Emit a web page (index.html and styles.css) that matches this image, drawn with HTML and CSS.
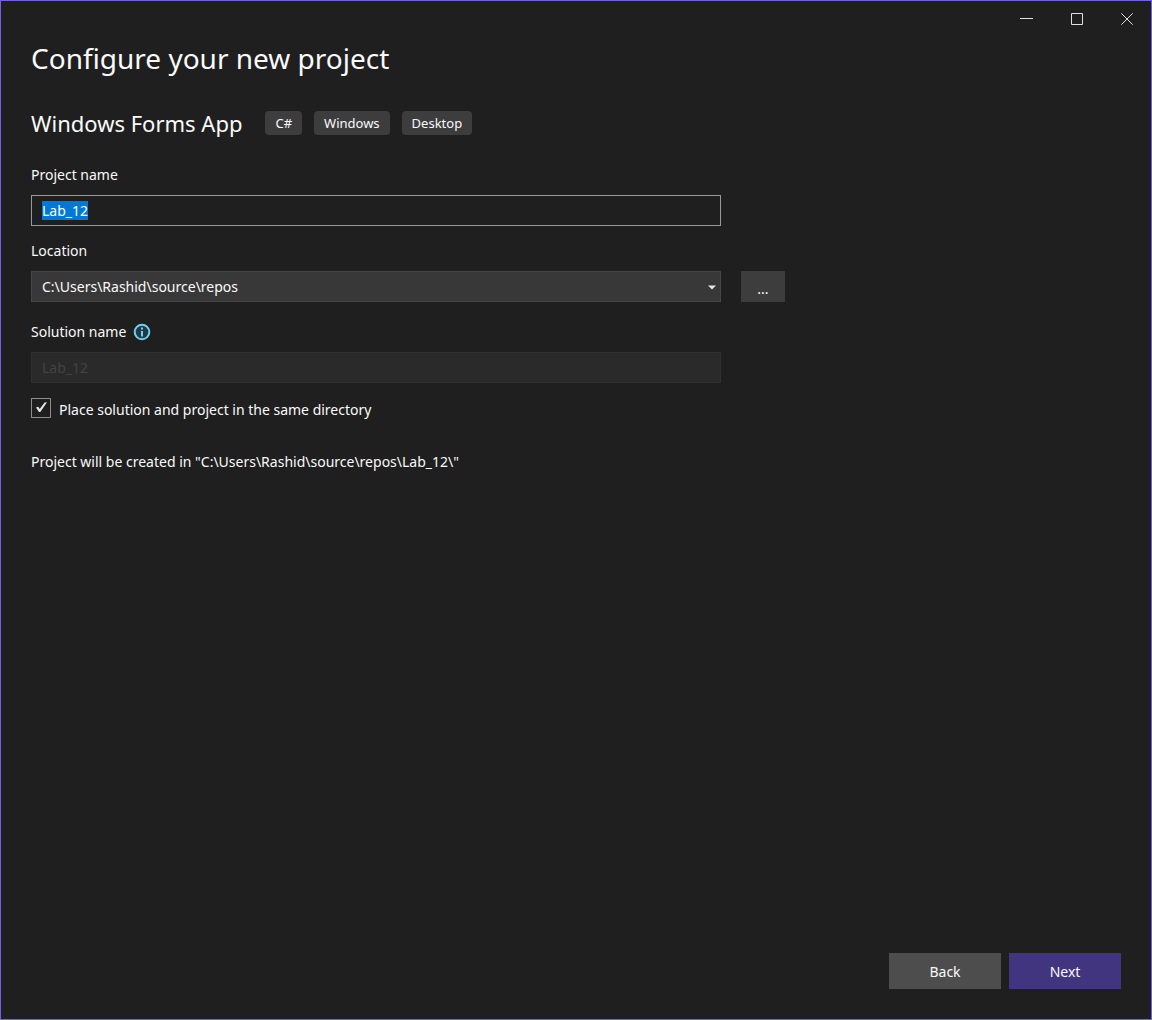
FILE: index.html
```html
<!DOCTYPE html>
<html lang="en">
<head>
<meta charset="utf-8">
<meta name="viewport" content="width=device-width, initial-scale=1">
<title>Configure your new project</title>
<link rel="stylesheet" href="styles.css">
</head>
<body>
<div class="window">
  <header class="titlebar">
    <button class="caption-button" type="button" aria-label="Minimize">
      <svg width="14" height="14" viewBox="0 0 14 14"><path d="M0 6.5h13" /></svg>
    </button>
    <button class="caption-button" type="button" aria-label="Maximize">
      <svg width="14" height="14" viewBox="0 0 14 14"><path d="M1.5 1.5h11v11h-11z" /></svg>
    </button>
    <button class="caption-button" type="button" aria-label="Close">
      <svg width="14" height="14" viewBox="0 0 14 14"><path d="M1.3 1.3l11.4 11.4M12.7 1.3L1.3 12.7" /></svg>
    </button>
  </header>
  <form class="page">
    <main class="content">
      <h1 class="title">Configure your new project</h1>
      <div class="template">
        <h2 class="template-name">Windows Forms App</h2>
        <ul class="tags">
          <li class="tag">C#</li>
          <li class="tag">Windows</li>
          <li class="tag">Desktop</li>
        </ul>
      </div>

      <div class="field">
        <label class="label" for="project-name">Project name</label>
        <input class="control" id="project-name" type="text" value="Lab_12" spellcheck="false" autocomplete="off" autofocus>
      </div>

      <div class="field">
        <label class="label" for="location">Location</label>
        <div class="location-row">
          <div class="combo">
            <select class="control control-filled" id="location">
              <option>C:\Users\Rashid\source\repos</option>
            </select>
            <svg class="combo-arrow" width="8" height="5" viewBox="0 0 8 5" aria-hidden="true"><path d="M0 .5h8L4 4.5z" /></svg>
          </div>
          <button class="browse" type="button" aria-label="Browse">...</button>
        </div>
      </div>

      <div class="field field-solution">
        <div class="label-row">
          <label class="label" for="solution-name">Solution name</label>
          <svg class="info" width="18" height="18" viewBox="0 0 18 18" aria-hidden="true">
            <circle class="info-ring" cx="9" cy="9" r="7.3" />
            <path class="info-mark" d="M8 4.5h2v2H8zM8 8h2v5.5H8z" />
          </svg>
        </div>
        <input class="control control-disabled" id="solution-name" type="text" value="Lab_12" disabled>
      </div>

      <div class="check-row">
        <span class="check">
          <input class="check-box" id="same-directory" type="checkbox" checked>
          <svg class="check-mark" width="20" height="20" viewBox="0 0 20 20" aria-hidden="true"><path d="M5 9.6L7.3 8.8 8.7 11 13.6 4.5 16 4.3 9.3 14 8 14z" /></svg>
        </span>
        <label class="check-label" for="same-directory">Place solution and project in the same directory</label>
      </div>

      <p class="summary">Project will be created in "C:\Users\Rashid\source\repos\Lab_12\"</p>
    </main>
    <footer class="actions">
      <button class="action" type="button">Back</button>
      <button class="action action-primary" type="submit">Next</button>
    </footer>
  </form>
</div>
<script src="script.js"></script>
</body>
</html>
```

FILE: styles.css
```css
* {
  box-sizing: border-box;
}

body {
  margin: 0;
  background: #1f1f1f;
  color: #fafafa;
  font: 14px/20px "Noto Sans", "Open Sans", sans-serif;
}

button,
input,
select {
  margin: 0;
  border: 0;
  border-radius: 0;
  color: inherit;
  font: inherit;
}

.window {
  display: flex;
  flex-direction: column;
  min-height: 100vh;
  border: 1px solid #7160e8;
}

.titlebar {
  display: flex;
  justify-content: flex-end;
  height: 36px;
  margin-right: -1px;
}

.caption-button {
  display: grid;
  place-items: center;
  width: 50px;
  padding: 0;
  background: none;
}

.caption-button path {
  fill: none;
  stroke: #e0e0e0;
}

.page {
  display: flex;
  flex: 1;
  flex-direction: column;
  justify-content: space-between;
  padding: 0 30px 30px;
}

.title {
  margin: 0;
  font-size: 28px;
  font-weight: 400;
  line-height: 42px;
}

.template {
  display: flex;
  flex-wrap: wrap;
  align-items: center;
  gap: 23px;
  margin-top: 28px;
}

.template-name {
  margin: 0;
  font-size: 22px;
  font-weight: 400;
  line-height: 32px;
}

.tags {
  display: flex;
  gap: 12px;
  margin: 0;
  padding: 0;
  list-style: none;
}

.tag {
  padding: 0 10px;
  border-radius: 4px;
  background: #3d3d3d;
  font-size: 13px;
  line-height: 24px;
}

.field {
  display: grid;
  gap: 10px;
  margin-top: 14px;
}

.template + .field {
  margin-top: 25px;
}

.field-solution {
  margin-top: 19px;
}

.label {
  line-height: 21px;
}

.label-row {
  display: flex;
  align-items: center;
  gap: 7px;
}

.info-ring {
  fill: #243a42;
  stroke: #6fd0f5;
  stroke-width: 2;
}

.info-mark {
  fill: #6fd0f5;
}

.control {
  width: 100%;
  max-width: 690px;
  height: 31px;
  padding: 0 10px;
  border: 1px solid #999;
  outline: 0;
  background: #1f1f1f;
}

.control::selection {
  background: #0078d7;
  color: #fff;
}

.control-filled {
  appearance: none;
  border-color: #464646;
  background: #383838;
}

.control-disabled {
  border-color: #303030;
  background: #2a2a2a;
  color: #434343;
}

.location-row {
  display: flex;
  gap: 20px;
}

.combo {
  position: relative;
  flex: 0 1 690px;
}

.combo .control {
  display: block;
}

.combo-arrow {
  position: absolute;
  top: 14px;
  right: 5px;
  fill: #e6e6e6;
  pointer-events: none;
}

.browse {
  width: 44px;
  padding: 4px 0 0;
  background: #3d3d3d;
}

.check-row {
  display: flex;
  align-items: flex-start;
  gap: 8px;
  margin-top: 15px;
}

.check {
  display: grid;
}

.check-box,
.check-mark {
  grid-area: 1 / 1;
}

.check-box {
  appearance: none;
  width: 20px;
  height: 20px;
  border: 1px solid #8c8c8c;
}

.check-mark {
  fill: #e6e6e6;
  pointer-events: none;
}

.check-label {
  padding-top: 2px;
}

.summary {
  margin: 32px 0 0;
}

.actions {
  display: flex;
  justify-content: flex-end;
  gap: 8px;
}

.action {
  width: 112px;
  height: 36px;
  padding: 2px 0 0;
  background: #4d4d4d;
}

.action-primary {
  background: #423580;
}
```

FILE: script.js
```js
document.getElementById("project-name").select();
```
